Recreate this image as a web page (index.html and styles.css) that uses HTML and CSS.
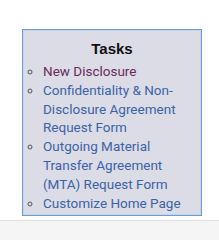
FILE: index.html
```html
<!DOCTYPE html>
<html lang="en">
<head>
    <meta charset="UTF-8">
    <meta name="viewport" content="width=device-width, initial-scale=1.0">
    <link rel="stylesheet" href="styles.css">
</head>
<body>
    <div class="page">
        <div class="tasks-box">
            <h3>Tasks</h3>
            <ul class="task-list">
                <li><a href="#" class="visited">New Disclosure</a></li>
                <li><a href="#">Confidentiality &amp; Non-Disclosure Agreement Request Form</a></li>
                <li><a href="#">Outgoing Material Transfer Agreement (MTA) Request Form</a></li>
                <li><a href="#">Customize Home Page</a></li>
            </ul>
        </div>
    </div>
    <div class="footer"></div>
</body>
</html>
```

FILE: styles.css
```css
body {
    margin: 0;
    padding: 0;
    font-family: Roboto, "Liberation Sans", sans-serif;
    background-color: #fff;
}

.page {
    height: 220px;
    padding: 29px 0 0 22px;
    box-sizing: border-box;
}

.tasks-box {
    width: 180px;
    height: 187px;
    box-sizing: border-box;
    background-color: #dcdce6;
    border: 1px solid #6a9fd4;
    box-shadow: inset 0 0 0 1px #c8d4e6;
}

.tasks-box h3 {
    margin: 0;
    padding-top: 10px;
    text-align: center;
    font-family: "Liberation Sans", Arial, sans-serif;
    font-size: 15px;
    font-weight: bold;
    line-height: 18px;
    color: #111;
}

.task-list {
    margin: 4px 0 0 0;
    padding-left: 20px;
    list-style: circle;
    font-size: 13.5px;
    line-height: 18.8px;
}

.task-list li {
    color: #555;
}

.task-list a {
    color: #3b63a6;
    text-decoration: none;
}

.task-list a.visited {
    color: #6b2a5e;
}

.footer {
    height: 20px;
    border-top: 1px solid #dedede;
    background-color: #f5f5f5;
}
```
